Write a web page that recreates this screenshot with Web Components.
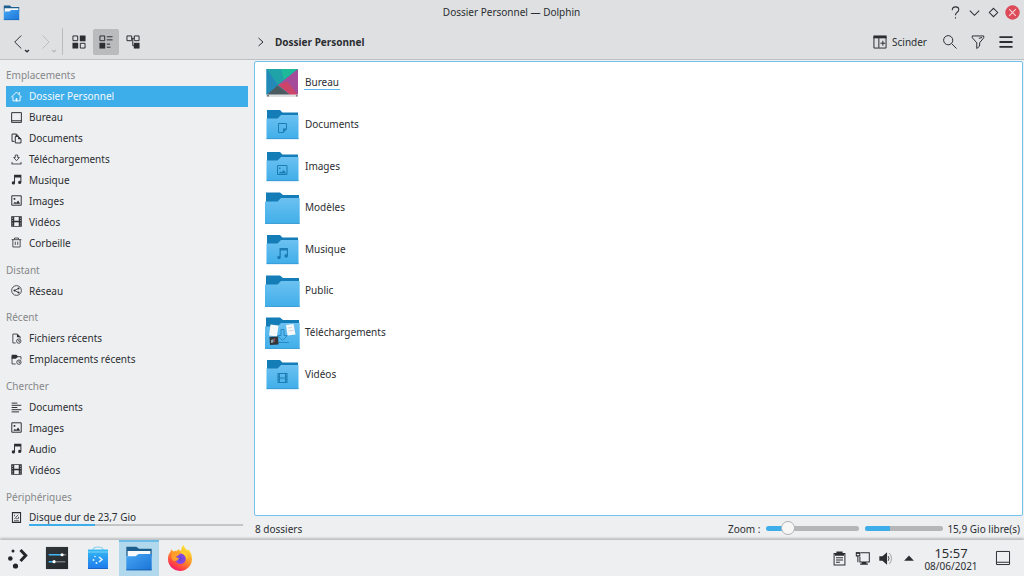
<!DOCTYPE html>
<html lang="fr">
<head>
<meta charset="utf-8">
<meta name="viewport" content="width=device-width, initial-scale=1">
<title>Dossier Personnel — Dolphin</title>
<style>
  html, body { height: 100%; margin: 0; }
  body {
    --header: #dee0e2; --base: #eeeff1; --ink: #2b2e31; --muted: #86888a;
    --accent: #3daee9; --track: #b5b6b7;
    display: flex; flex-direction: column; background: var(--base); color: var(--ink);
    font: 10px/16px "Noto Sans", "Open Sans", sans-serif; overflow: hidden;
  }
  dolphin-window { flex: 1; min-height: 0; }
</style>
</head>
<body>
<dolphin-window></dolphin-window>
<task-bar></task-bar>

<script>
const folder = (big, glyph = '') => `
  <defs>
    <linearGradient id="f" x1="0" y1="0" x2="0" y2="1"><stop offset="0" stop-color="#6cc1f1"/><stop offset="1" stop-color="#40aee9"/></linearGradient>
  </defs>
  ${big
    ? `<path fill="#147cb6" d="M2 2.500h14l3 2.500h16v8H2z"/><path fill="url(#f)" d="M1 11.500h12.500L17 8h18.700v25.800H1z"/><path stroke="#3596cf" stroke-width=".8" d="M1 33.500h34.700"/>`
    : `<path fill="#147cb6" d="M3 4h13l2.500 2.500H34v7H3z"/><path fill="url(#f)" d="M2.500 12.500h11L17 9h17.500v24h-32z"/><path stroke="#3596cf" stroke-width=".8" d="M2.500 32.700h32"/>`}
  ${glyph}`;

const art = {
  home: [16, '<g fill="none" stroke="currentColor" stroke-width="1.200"><path d="M1.500 9 8 2.500 14.500 9M3.600 8v5.400h8.800V8M11.500 2.500v3"/><path fill="currentColor" d="M7.500 10.500h1v3h-1z"/></g>'],
  desktop: [16, '<path fill="none" stroke="currentColor" stroke-width="1.200" d="M2 2h12v12H2zM2 12h12"/>'],
  documents: [16, '<path fill="none" stroke="currentColor" stroke-width="1.200" d="M5.500 11.500h-3v-9h5.500l2 2M6.500 5.500h4l3 3v5h-7z"/><path fill="currentColor" d="M10 5l4 4h-4zM7 2l3 3H7z"/>'],
  download: [16, '<path fill="none" stroke="currentColor" d="M6.500 2.500h3v3h2L8 9.500 4.500 5.500h2zM2 13.500h12M2.500 11v2.500m11-2.500v2.500"/>'],
  music: [16, '<path fill="currentColor" d="M5 2h9v9.500a2 2 0 1 1-1.200-1.800V5.500H6.200v6.700a2 2 0 1 1-1.200-1.800z"/>'],
  image: [16, '<path fill="none" stroke="currentColor" stroke-width="1.200" d="M2.200 2.200h11.600v11.600H2.200z"/><path fill="currentColor" d="M4.500 5h2v2h-2zM4 12l2-2.500L7.500 11l2.500-3 2.500 4z"/>'],
  video: [16, '<path fill="currentColor" fill-rule="evenodd" d="M1.500 1.500h13v13h-13zM5.200 2.500v4.600h5.600V2.500zM5.200 8.900v4.600h5.600V8.900zM2.800 3.500v1h1v-1zm0 3v1h1v-1zm0 3v1h1v-1zm0 2.500v1h1v-1zM12.200 3.500v1h1v-1zm0 3v1h1v-1zm0 3v1h1v-1zm0 2.500v1h1v-1z"/>'],
  trash: [16, '<path fill="none" stroke="currentColor" d="M2 4.500h12M3.500 4.500v9h9v-9M5.500 4V2.500h5V4M6.500 7v4M9.500 7v4"/>'],
  network: [16, '<g fill="none" stroke="currentColor"><circle cx="8" cy="8" r="6"/><path d="M10.500 5.500 5.500 8l5 2.500"/></g><g fill="currentColor"><circle cx="5.500" cy="8" r="1.200"/><circle cx="10.500" cy="5.500" r="1.200"/><circle cx="10.500" cy="10.500" r="1.200"/></g>'],
  recentfile: [16, '<path fill="none" stroke="currentColor" d="M7 13.500H3.500v-11H9l3.500 3.500v2"/><path fill="currentColor" d="M8.500 2 13 6.500H8.500z"/><circle cx="10.800" cy="11.200" r="2.700" fill="none" stroke="currentColor"/><path fill="none" stroke="currentColor" d="M10.800 9.700v1.700h1.500"/>'],
  recentfolder: [16, '<path fill="none" stroke="currentColor" d="M7 13.500H2.500v-9h11V8"/><path fill="currentColor" d="M2 2h6l2 2.500-3 2.500H2z"/><circle cx="11" cy="11.300" r="2.700" fill="none" stroke="currentColor"/><path fill="none" stroke="currentColor" d="M11 9.800v1.700h1.500"/>'],
  lines: [16, '<path fill="none" stroke="currentColor" stroke-width="1.200" d="M2 2.600h7M2 5.300h12M2 8h7M2 10.700h12M2 13.400h9"/>'],
  disk: [16, '<path fill="none" stroke="currentColor" stroke-width="1.300" d="M3 2h10v12H3z"/><path fill="none" stroke="currentColor" d="M5 12h6M5.500 10 10 4.500M5.500 4.500v2M10.500 7v2.500M7.500 9.500h2"/>'],

  back: [22, '<path fill="none" stroke="currentColor" stroke-width="1.200" d="M15 3 7 11l8 8"/>'],
  forward: [22, '<path fill="none" stroke="currentColor" stroke-width="1.200" d="M8 3l8 8-8 8"/>'],
  drop: [6, '<path fill="none" stroke="currentColor" stroke-width="1.300" d="M1 2l2 1.800L5 2"/>'],
  icons: [22, '<g fill="none" stroke="currentColor" stroke-width="1.200"><path d="M3.600 3.600h5.800v5.800H3.600zM12.600 12.600h5.800v5.800h-5.800z"/></g><path fill="currentColor" d="M12 3h7v7h-7zM3 12h7v7H3z"/>'],
  compact: [22, '<path fill="none" stroke="currentColor" stroke-width="1.200" d="M3.600 3.600h5.800v5.800H3.600zM12 4.600h7M12 8.400h7M12 13.600h4M12 17.400h4.500"/><path fill="currentColor" d="M3 12h7v7H3z"/>'],
  tree: [22, '<path fill="none" stroke="currentColor" stroke-width="1.200" d="M3.600 3.600h5.800v5.800H3.600zM12.600 3.600h5.800v5.800h-5.800zM9.500 6.500h3M10.700 6.500v9H13"/><path fill="currentColor" d="M12 12h7v7h-7z"/>'],
  split: [22, '<path fill="none" stroke="currentColor" stroke-width="1.200" d="M3.600 4.600h14.800v13.800H3.600zM9.600 5v13M11.500 12.500h6M14.500 9.500v6"/><path fill="currentColor" d="M3 3h16v3.500H3z"/>'],
  search: [22, '<path fill="none" stroke="currentColor" stroke-width="1.200" d="M13 13l6 6"/><circle cx="8.800" cy="8.800" r="5.600" fill="none" stroke="currentColor" stroke-width="1.200"/>'],
  filter: [22, '<path fill="none" stroke="currentColor" stroke-width="1.200" d="M4 3.600h14v2.200L13 12v4l-3.500 3V12L4 5.800zM12 6.500l4-1"/>'],
  menu: [22, '<path fill="currentColor" d="M3 4h16v2.200H3zM3 9.900h16v2.200H3zM3 15.800h16V18H3z"/>'],
  crumb: [10, '<path fill="none" stroke="currentColor" d="M2.500 1l4.500 4-4.500 4"/>'],

  help: [16, '<path fill="none" stroke="currentColor" stroke-width="1.100" d="M4.500 5.500q0-3.500 3.500-3.500t3.500 3q0 1.500-1.700 2.700T8 10.500V11M8 13v1.500"/>'],
  minimize: [16, '<path fill="none" stroke="currentColor" stroke-width="1.100" d="M3 6l5 5 5-5"/>'],
  maximize: [16, '<path fill="none" stroke="currentColor" stroke-width="1.100" d="M8 3.500 12.500 8 8 12.500 3.500 8z"/>'],
  close: [16, '<circle cx="8" cy="8" r="7.700" fill="#dd4a58"/><path stroke="#f6d9dc" stroke-width="1.100" d="M4.500 4.500l7 7M11.500 4.500l-7 7"/>'],

  dolphin: [32, '<defs><linearGradient id="d" x1="0" y1="0" x2="1" y2="1"><stop offset="0" stop-color="#46a5f3"/><stop offset="1" stop-color="#1a74d6"/></linearGradient></defs><path fill="#1c5f8e" d="M1.500 3h11.500l3 2.500h14.500V14h-29z"/><path fill="#f6f8fa" d="M3 8h26v7H3z"/><path fill="url(#d)" d="M1.500 14H12l3.500-2.500h15V30h-29z"/><path stroke="#195fae" d="M1.500 29.500h29"/>'],
  launcher: [22, '<g fill="#232629"><circle cx="6" cy="4" r="1.500"/><circle cx="3.300" cy="11.500" r="2.300"/><circle cx="8.500" cy="19" r="2.600"/></g><path fill="none" stroke="#232629" stroke-width="3" d="M13.500 3l5.200 5.500-5.200 5.500"/>'],
  settings: [26, '<defs><linearGradient id="s" x1="0" y1="0" x2="1" y2="1"><stop offset="0" stop-color="#30363b"/><stop offset="1" stop-color="#25292d"/></linearGradient></defs><path fill="url(#s)" d="M1 1h24v24H1z"/><g stroke-width="1.500"><path stroke="#44b6f2" d="M4 9.500h14M4 17h5"/><path stroke="#75797c" d="M19 9.500h4M10 17h12"/></g><circle cx="18.500" cy="9.500" r="1.700" fill="#fff"/><circle cx="9.800" cy="17" r="1.700" fill="#fff"/>'],
  discover: [24, '<defs><linearGradient id="b" x1="0" y1="0" x2="0" y2="1"><stop offset="0" stop-color="#35b9f5"/><stop offset="1" stop-color="#2079ec"/></linearGradient></defs><path fill="none" stroke="#83cff1" stroke-width="1.200" d="M7 5.500V4q0-3 5-3t5 3v1.500"/><path fill="url(#b)" d="M2 3.500h20V23H2z"/><path stroke="#7dd4f9" d="M2 6h20"/><g fill="#d8f1ff"><circle cx="9" cy="10.500" r=".8"/><circle cx="7.500" cy="14" r="1"/><circle cx="10.500" cy="17" r="1"/></g><path fill="none" stroke="#e4f6ff" stroke-width="1.500" d="M13 11l3 2.500-3 2.500"/><path stroke="#1b65c4" d="M2 22.500h20"/>'],
  firefox: [26, '<defs><linearGradient id="o" x1=".8" y1=".1" x2=".3" y2="1"><stop offset="0" stop-color="#ffe436"/><stop offset=".45" stop-color="#ff9425"/><stop offset=".8" stop-color="#ff4245"/><stop offset="1" stop-color="#ee1a72"/></linearGradient><radialGradient id="v"><stop offset="0" stop-color="#6447d8"/><stop offset="1" stop-color="#9048dd"/></radialGradient></defs><path fill="url(#o)" d="M16.500 0q1 3.500 4 5.300l1.500-.6q3 4 3 9a12 12 0 0 1-24 .6Q1 9 3.500 7L4 4.500q1.500 1 2.500 2Q8 5.500 10 5.700L12 4l1 2 1.500-.7Q14 2.300 16.500 0z"/><circle cx="13.500" cy="13.700" r="5.300" fill="url(#v)"/><path fill="#ffa02d" d="M5 9q4-2.500 8-.5l-1.500 2q-2 .3-2.500 1.500 1.500 1 3 1l-1.500 2.500-4 .5Q3.500 13 5 9z"/><path fill="#ffd22f" d="M14.500 5.500Q22 8 20 14.500 18 9 14 8z"/>'],

  clipboard: [22, '<path fill="none" stroke="currentColor" stroke-width="1.300" d="M4 4.600h14v14.800H4zM6.500 10h9M6.500 13h9M6.500 16h5"/><path fill="currentColor" d="M7 2h8v2h2v3.500H5V4h2z"/>'],
  wired: [22, '<path fill="none" stroke="currentColor" stroke-width="1.300" d="M8.500 3.600h11.300v12H7.600V9M3 3.600h4.500v4H3zM5 8v8"/><path fill="currentColor" d="M10 15.500h6v2h2V19H8v-1.500h2z"/><path fill="currentColor" d="M2.500 3h5v2h-5z"/>'],
  volume: [22, '<path fill="currentColor" d="M3 8h4l6-5v16l-6-5H3z"/><path fill="none" stroke="currentColor" stroke-width="1.200" d="M14.500 8q2 3 0 6"/><path fill="none" stroke="#999b9d" stroke-width="1.200" d="M16 4q5.500 7 0 14"/>'],
  expand: [22, '<path fill="currentColor" d="M5 14.500 11 8l6 6.500z"/>'],
  showdesktop: [22, '<path fill="none" stroke="currentColor" stroke-width="1.200" d="M3 3h16v16H3zM3 16.200h16"/>'],

  'dir-desktop': [36, '<path fill="#1f9db0" d="M2.500 4h31.500v26H2.500z"/><path fill="#2389b8" d="M2.500 4H10L14 20 2.500 30z"/><path fill="#1fa3a8" d="M2.500 4H34L14 20z"/><path fill="#1db99a" d="M17 4h17L20 15z"/><path fill="#a64b9a" d="M34 4v26L14 20z"/><path fill="#cc4468" d="M14 20l9-3.500L34 30h-8z"/><path fill="#4b5b60" d="M13.500 20.500 2.500 30H26z"/><path fill="#dddfe1" d="M2.500 29.500H34V32H2.500z"/><path fill="#75797d" d="M3 30h2v1.500H3zM32 30h1.500v1.500H32z"/>'],
  'dir-plain': [36, folder(true)],
  'dir-documents': [36, folder(false, '<path fill="none" stroke="#1c7db4" d="M14.500 17.500h8v5.500l-3 3.500h-5z"/><path fill="#1c7db4" d="M19 22.500h4l-4 4z"/>')],
  'dir-images': [36, folder(false, '<path fill="none" stroke="#1c7db4" d="M13.500 17.500h9.500v9h-9.500z"/><path fill="#1c7db4" d="M15 19.500h1.500V21H15zM14.500 25.500l2-2 1 1 2-2.500 3 3.500z"/>')],
  'dir-music': [36, folder(false, '<path fill="#1c7db4" d="M15.500 17H24v8a1.800 1.800 0 1 1-1.200-1.700V19.500h-6v7a1.800 1.800 0 1 1-1.300-1.700z"/>')],
  'dir-videos': [36, folder(false, '<path fill="#1c7db4" fill-rule="evenodd" d="M13.500 17h10v10h-10zM16 18v3.500h5V18zM16 22.500V26h5v-3.500zM14.300 18.500v1h.8v-1zm0 3v1h.8v-1zm0 3v1h.8v-1zM21.900 18.500v1h.8v-1zm0 3v1h.8v-1zm0 3v1h.8v-1z"/>')],
  'dir-downloads': [36, folder(true, '<path fill="none" stroke="#268ac4" d="M17 14.500h3v6h3.500l-5 5-5-5H17zM11 27.500h14"/><path fill="#f6f8fa" d="M6.500 9.500 14.500 10.500 13 21.500 5 20.500zM22 10l7.500-1 2 10.500-8 1z"/><path stroke="#c2c7cc" stroke-width=".7" d="M24 13l4-.5M24.500 16l5-.7"/><path fill="#31363b" d="M5.500 22 14 21.500 14.500 29.500 6 30z"/><path fill="#8fa1aa" d="M7 25l2.500-1v3.500l-2.500.500z"/><path fill="#a8464e" d="M10.200 23h1v4h-1z"/>')],
};

/* Base class: renders the class's static markup in an open shadow root. */
class Part extends HTMLElement {
  connectedCallback() {
    if (this.shadowRoot) return;
    const t = document.createElement('template');
    t.innerHTML = `<style>
      *, *::before { box-sizing: border-box; }
      button { font: inherit; color: inherit; background: none; border: 0; padding: 0; margin: 0;
        display: flex; align-items: center; justify-content: center; }
      a { color: inherit; text-decoration: none; }
    </style>` + this.render();
    this.attachShadow({ mode: 'open' }).append(t.content.cloneNode(true));
  }
}
const define = (name, render) => customElements.define(name, class extends Part { render() { return render(this); } });

define('ui-icon', el => {
  const [box, body] = art[el.getAttribute('name')];
  const size = el.getAttribute('size') || 18;
  return `<style>:host { display: block; flex: none; } svg { display: block; }</style>
    <svg width="${size}" height="${size}" viewBox="0 0 ${box} ${box}" aria-hidden="true">${body}</svg>`;
});

define('title-bar', () => `
  <style>
    :host { display: grid; grid-template-columns: 1fr auto 1fr; align-items: center; height: 24px; padding: 0 4px 0 3px; background: var(--header); }
    .controls { display: flex; gap: 4px; justify-content: flex-end; }
    h1 { margin: 0; font: inherit; }
  </style>
  <ui-icon name="dolphin" size="17"></ui-icon>
  <h1><slot></slot></h1>
  <div class="controls">
    <button aria-label="Aide"><ui-icon name="help" size="15"></ui-icon></button>
    <button aria-label="Réduire"><ui-icon name="minimize" size="15"></ui-icon></button>
    <button aria-label="Agrandir"><ui-icon name="maximize" size="15"></ui-icon></button>
    <button aria-label="Fermer"><ui-icon name="close" size="15"></ui-icon></button>
  </div>`);

define('tool-bar', () => `
  <style>
    :host { display: flex; align-items: center; height: 36px; padding: 0 5px; background: var(--header); border-bottom: 1px solid #bfc1c3; }
    .group { display: flex; align-items: center; gap: 1px; }
    .group button { width: 26px; height: 26px; border-radius: 2px; }
    .group button[aria-pressed="true"] { background: #b9bbbc; }
    .history { position: relative; }
    .history .drop { position: absolute; right: 1px; bottom: 1px; }
    .history:disabled { color: #b9bbbd; }
    .rule { width: 1px; height: 27px; margin: 0 3px 0 4px; background: #b9bbbd; }
    nav { display: flex; align-items: center; gap: 9px; flex: 1; margin-left: 110px; font-weight: bold; }
    .group.actions { gap: 2px; }
    .actions .split { width: auto; gap: 3px; padding-right: 8px; }
  </style>
  <div class="group">
    <button class="history" aria-label="Précédent"><ui-icon name="back"></ui-icon><ui-icon class="drop" name="drop" size="6"></ui-icon></button>
    <button class="history" aria-label="Suivant" disabled><ui-icon name="forward"></ui-icon><ui-icon class="drop" name="drop" size="6"></ui-icon></button>
  </div>
  <div class="rule"></div>
  <div class="group">
    <button aria-label="Icônes"><ui-icon name="icons"></ui-icon></button>
    <button aria-label="Compact" aria-pressed="true"><ui-icon name="compact"></ui-icon></button>
    <button aria-label="Détails"><ui-icon name="tree"></ui-icon></button>
  </div>
  <nav aria-label="Emplacement"><ui-icon name="crumb" size="10"></ui-icon><a href="#home">Dossier Personnel</a></nav>
  <div class="group actions">
    <button class="split"><ui-icon name="split"></ui-icon>Scinder</button>
    <button aria-label="Rechercher"><ui-icon name="search"></ui-icon></button>
    <button aria-label="Filtrer"><ui-icon name="filter"></ui-icon></button>
    <button aria-label="Menu"><ui-icon name="menu"></ui-icon></button>
  </div>`);

define('place-group', el => `
  <style>
    :host { display: grid; grid-auto-rows: 1fr; flex: ${el.children.length + 1} 1 0; }
    h2 { margin: 0; font: inherit; color: var(--muted); display: flex; align-items: center; }
  </style>
  <h2>${el.getAttribute('label')}</h2><slot></slot>`);

define('place-item', el => `
  <style>
    :host { display: grid; }
    a { display: flex; align-items: center; gap: 6px; padding: 0 5px 0 4px; }
    :host([selected]) a { background: var(--accent); color: #f3f9fd; }
    .text { flex: 1; }
    progress { display: block; appearance: none; width: 100%; height: 2px; border: 0; margin-top: -1px; }
    progress::-webkit-progress-bar { background: #c4c6c8; }
    progress::-webkit-progress-value { background: var(--accent); }
  </style>
  <a href="#place"><ui-icon name="${el.getAttribute('icon')}" size="13"></ui-icon><span class="text"><slot></slot>${
    el.hasAttribute('used') ? `<progress aria-label="Espace utilisé" max="100" value="${el.getAttribute('used')}"></progress>` : ''}</span></a>`);

define('places-panel', () => `
  <style>
    :host { display: flex; flex-direction: column; gap: 6px; padding: 5px 6px 12px; }
  </style>
  <place-group label="Emplacements">
    <place-item icon="home" selected>Dossier Personnel</place-item>
    <place-item icon="desktop">Bureau</place-item>
    <place-item icon="documents">Documents</place-item>
    <place-item icon="download">Téléchargements</place-item>
    <place-item icon="music">Musique</place-item>
    <place-item icon="image">Images</place-item>
    <place-item icon="video">Vidéos</place-item>
    <place-item icon="trash">Corbeille</place-item>
  </place-group>
  <place-group label="Distant">
    <place-item icon="network">Réseau</place-item>
  </place-group>
  <place-group label="Récent">
    <place-item icon="recentfile">Fichiers récents</place-item>
    <place-item icon="recentfolder">Emplacements récents</place-item>
  </place-group>
  <place-group label="Chercher">
    <place-item icon="lines">Documents</place-item>
    <place-item icon="image">Images</place-item>
    <place-item icon="music">Audio</place-item>
    <place-item icon="video">Vidéos</place-item>
  </place-group>
  <place-group label="Périphériques">
    <place-item icon="disk" used="31">Disque dur de 23,7 Gio</place-item>
  </place-group>`);

define('folder-item', el => `
  <style>
    :host { display: grid; }
    a { display: flex; align-items: center; gap: 4px; }
    span { padding: 0 1px; border-bottom: 1px solid transparent; line-height: 14px; }
    :host([current]) span { border-color: #5cb9ea; }
  </style>
  <a href="#folder"><ui-icon name="${el.getAttribute('icon')}" size="36"></ui-icon><span><slot></slot></span></a>`);

define('folder-view', () => `
  <style>
    :host { display: block; background: #fff; border: 1px solid #74c3ef; border-radius: 2px; padding: 0 9px; overflow: hidden; }
    .list { display: grid; grid-auto-rows: 1fr; justify-content: start; height: 333px; }
  </style>
  <div class="list">
    <folder-item icon="dir-desktop" current>Bureau</folder-item>
    <folder-item icon="dir-documents">Documents</folder-item>
    <folder-item icon="dir-images">Images</folder-item>
    <folder-item icon="dir-plain">Modèles</folder-item>
    <folder-item icon="dir-music">Musique</folder-item>
    <folder-item icon="dir-plain">Public</folder-item>
    <folder-item icon="dir-downloads">Téléchargements</folder-item>
    <folder-item icon="dir-videos">Vidéos</folder-item>
  </div>`);

define('status-bar', () => `
  <style>
    :host { display: flex; align-items: center; height: 24px; padding: 1px 3px 0 1px; }
    .count { flex: 1; }
    input { appearance: none; width: 93px; height: 16px; margin: 0 6px; background: none; }
    input::-webkit-slider-runnable-track { height: 5px; border-radius: 3px;
      background: linear-gradient(90deg, var(--accent) 24%, var(--track) 24%); }
    input::-webkit-slider-thumb { appearance: none; width: 14px; height: 14px; margin-top: -5px; border-radius: 50%;
      background: #f7f7f8; border: 1px solid #b0b2b4; }
    progress { appearance: none; width: 78px; height: 5px; margin-right: 4px; border: 0; border-radius: 3px; overflow: hidden; }
    progress::-webkit-progress-bar { background: var(--track); }
    progress::-webkit-progress-value { background: var(--accent); }
  </style>
  <span class="count">8 dossiers</span>
  <label for="zoom">Zoom :</label><input id="zoom" type="range" min="0" max="100" value="18">
  <progress id="space" max="100" value="31" aria-label="Espace utilisé"></progress><label for="space">15,9 Gio libre(s)</label>`);

define('dolphin-window', () => `
  <style>
    :host { display: flex; flex-direction: column; }
    .body { flex: 1; min-height: 0; display: grid; grid-template-columns: 254px 1fr; }
    main { display: flex; flex-direction: column; min-height: 0; padding: 1px 1px 0 0; }
    folder-view { flex: 1; min-height: 0; }
  </style>
  <title-bar>Dossier Personnel — Dolphin</title-bar>
  <tool-bar></tool-bar>
  <div class="body">
    <places-panel></places-panel>
    <main><folder-view></folder-view><status-bar></status-bar></main>
  </div>`);

define('task-bar', () => `
  <style>
    :host { display: flex; height: 36px; background: var(--base); box-shadow: 0 -2px 2px #bdbfc0; position: relative; }
    .apps { display: flex; gap: 1px; flex: 1; }
    .apps button { width: 40px; }
    .apps .start { width: 36px; }
    .apps .active { background: #b2d8ed; border-top: 2px solid #6cbde9; padding-bottom: 2px; }
    .tray { display: flex; }
    .tray button { width: 23px; }
    .tray .desk { width: 42px; }
    .clock { width: 62px; display: flex; flex-direction: column; align-items: center; justify-content: center; }
    .time { font-size: 13px; line-height: 16px; }
    .date { font-size: 10px; line-height: 11px; }
  </style>
  <div class="apps">
    <button class="start" aria-label="Menu des applications"><ui-icon name="launcher" size="22"></ui-icon></button>
    <button aria-label="Configuration"><ui-icon name="settings" size="24"></ui-icon></button>
    <button aria-label="Discover"><ui-icon name="discover" size="24"></ui-icon></button>
    <button class="active" aria-label="Dolphin"><ui-icon name="dolphin" size="28"></ui-icon></button>
    <button aria-label="Firefox"><ui-icon name="firefox" size="26"></ui-icon></button>
  </div>
  <div class="tray">
    <button aria-label="Presse-papiers"><ui-icon name="clipboard" size="17"></ui-icon></button>
    <button aria-label="Réseau"><ui-icon name="wired" size="17"></ui-icon></button>
    <button aria-label="Volume"><ui-icon name="volume" size="17"></ui-icon></button>
    <button aria-label="Afficher plus"><ui-icon name="expand" size="18"></ui-icon></button>
    <div class="clock"><span class="time">15:57</span><span class="date">08/06/2021</span></div>
    <button class="desk" aria-label="Afficher le bureau"><ui-icon name="showdesktop" size="18"></ui-icon></button>
  </div>`);
</script>
</body>
</html>
